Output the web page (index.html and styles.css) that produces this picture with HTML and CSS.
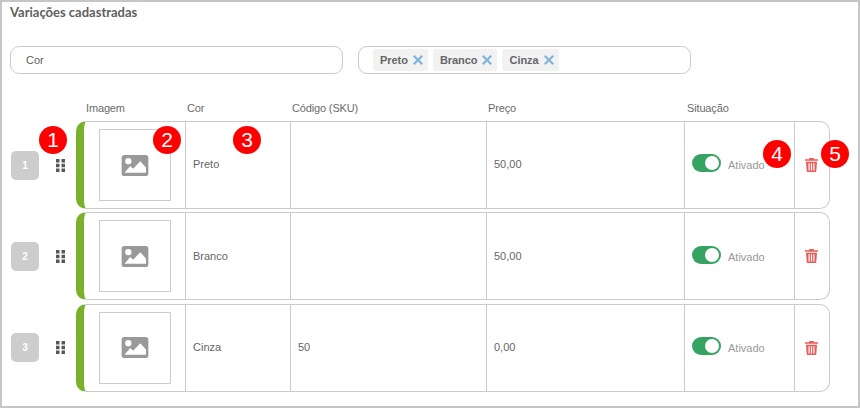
FILE: index.html
```html
<!DOCTYPE html>
<html lang="pt">
<head>
<meta charset="utf-8">
<title>Variações cadastradas</title>
<link rel="stylesheet" href="styles.css">
</head>
<body>
<svg class="defs" width="0" height="0" aria-hidden="true">
  <symbol id="img" viewBox="0 0 28 22"><path fill-rule="evenodd" d="M3 0h22a3 3 0 0 1 3 3v16a3 3 0 0 1-3 3H3a3 3 0 0 1-3-3V3a3 3 0 0 1 3-3zM7 3.200a3.300 3.300 0 1 0 0 6.600 3.300 3.300 0 0 0 0-6.600zM3 18.500h22.500v-5.500l-6-6.500-7.500 8-3-3z"/></symbol>
  <symbol id="grip" viewBox="0 0 9 13"><path d="M0 0h3.500v3.500H0zM5.500 0H9v3.500H5.500zM0 4.750h3.500v3.500H0zM5.500 4.750H9v3.500H5.500zM0 9.500h3.500V13H0zM5.500 9.500H9V13H5.500z"/></symbol>
  <symbol id="trash" viewBox="0 0 13 14"><path fill-rule="evenodd" d="M4.500 0h4l.6 1.300H13v1.500H0V1.300h3.900zM1 3.700h11l-.7 9.200a1.100 1.100 0 0 1-1.100 1.100H2.800a1.100 1.100 0 0 1-1.100-1.100zM3.500 5.200v7.200h1.200V5.200zM5.900 5.200v7.200h1.200V5.200zM8.300 5.200v7.200h1.200V5.200z"/></symbol>
  <symbol id="x" viewBox="0 0 10 10"><path d="M1.600 0 5 3.400 8.400 0 10 1.600 6.600 5 10 8.400 8.400 10 5 6.600 1.600 10 0 8.400 3.400 5 0 1.600z"/></symbol>
</svg>
<main class="frame">
  <h2 class="title">Variações cadastradas</h2>
  <div class="fields">
    <div class="field field-name">Cor</div>
    <div class="field field-tags">
      <span class="tag">Preto <svg class="tag-x"><use href="#x"/></svg></span>
      <span class="tag">Branco <svg class="tag-x"><use href="#x"/></svg></span>
      <span class="tag">Cinza <svg class="tag-x"><use href="#x"/></svg></span>
    </div>
  </div>
  <div class="head">
    <span>Imagem</span><span>Cor</span><span>Código (SKU)</span><span>Preço</span><span>Situação</span>
  </div>
  <div class="rows">
    <div class="row">
      <span class="num">1</span>
      <svg class="grip"><use href="#grip"/></svg>
      <div class="card">
        <div class="cell cell-img"><div class="thumb"><svg class="img-ico"><use href="#img"/></svg></div></div>
        <div class="cell">Preto</div>
        <div class="cell"></div>
        <div class="cell">50,00</div>
        <div class="cell cell-status"><span class="toggle"></span><span class="status">Ativado</span></div>
        <div class="cell cell-del"><svg class="trash"><use href="#trash"/></svg></div>
      </div>
    </div>
    <div class="row">
      <span class="num">2</span>
      <svg class="grip"><use href="#grip"/></svg>
      <div class="card">
        <div class="cell cell-img"><div class="thumb"><svg class="img-ico"><use href="#img"/></svg></div></div>
        <div class="cell">Branco</div>
        <div class="cell"></div>
        <div class="cell">50,00</div>
        <div class="cell cell-status"><span class="toggle"></span><span class="status">Ativado</span></div>
        <div class="cell cell-del"><svg class="trash"><use href="#trash"/></svg></div>
      </div>
    </div>
    <div class="row">
      <span class="num">3</span>
      <svg class="grip"><use href="#grip"/></svg>
      <div class="card">
        <div class="cell cell-img"><div class="thumb"><svg class="img-ico"><use href="#img"/></svg></div></div>
        <div class="cell">Cinza</div>
        <div class="cell">50</div>
        <div class="cell">0,00</div>
        <div class="cell cell-status"><span class="toggle"></span><span class="status">Ativado</span></div>
        <div class="cell cell-del"><svg class="trash"><use href="#trash"/></svg></div>
      </div>
    </div>
  </div>
  <span class="mark mark-1">1</span>
  <span class="mark mark-2">2</span>
  <span class="mark mark-3">3</span>
  <span class="mark mark-4">4</span>
  <span class="mark mark-5">5</span>
</main>
</body>
</html>
```
FILE: styles.css
```css
* { box-sizing: border-box; }
html, body { margin: 0; padding: 0; background: #fff; }
body { width: 860px; height: 408px; overflow: hidden; font-family: "Liberation Sans", Arial, sans-serif; font-size: 11px; color: #666; }
.defs { position: absolute; }
.frame { position: relative; width: 860px; height: 408px; border: 2px solid #c6c6c6; padding: 0 0 0 8px; }
.title { margin: 0; padding-top: 2px; height: 44px; font: 700 13px/16px Lato, sans-serif; color: #5f5f5f; }
.fields { display: flex; gap: 15px; }
.field { width: 333px; height: 28px; border: 1px solid #cbcbcb; border-radius: 9px; display: flex; align-items: center; background: #fff; }
.field-name { padding-left: 15px; color: #5f5f5f; }
.field-tags { padding-left: 14px; gap: 5px; }
.tag { display: flex; align-items: center; gap: 5px; height: 22px; padding: 0 5px 0 7px; border-radius: 2px; background: #f2f2f2; font-weight: 700; color: #666; letter-spacing: -0.05px; }
.tag-x { width: 10px; height: 10px; fill: #7fb5d8; }
.head { display: grid; grid-template-columns: 101px 105px 196px 199px 110px; height: 47px; padding-left: 76px; padding-top: 28px; line-height: 13px; color: #6b6b6b; letter-spacing: -0.15px; }
.rows { display: flex; flex-direction: column; gap: 3px; }
.row { display: flex; align-items: center; height: 88.4px; }
.num { width: 28px; height: 29px; margin-left: 1px; border-radius: 5px; background: #cdcdcd; color: #fff; font-size: 10px; font-weight: 700; display: flex; align-items: center; justify-content: center; }
.grip { width: 9px; height: 13px; margin-left: 17px; fill: #55585c; }
.card { align-self: flex-start; width: 754px; height: 88px; margin-left: 11px; border: 1px solid #cbcbcb; border-left: 8px solid #79b22a; border-radius: 10px; display: grid; grid-template-columns: 102px 105px 196px 198px 110px 1fr; overflow: hidden; }
.cell { display: flex; align-items: center; padding: 0 0 1.5px 7px; border-right: 1px solid #cbcbcb; color: #666; }
.cell:last-child { border-right: 0; }
.cell-img { padding: 0 0 0 15px; }
.thumb { width: 72px; height: 72px; border: 1px solid #cbcbcb; display: flex; align-items: center; justify-content: center; }
.img-ico { width: 28px; height: 21px; fill: #999; }
.cell-status { padding-left: 7px; gap: 7px; }
.toggle { position: relative; width: 29px; height: 18px; border-radius: 9px; background: #37a362; margin-top: -2px; }
.toggle::after { content: ""; position: absolute; right: 2px; top: 2px; width: 14px; height: 14px; border-radius: 50%; background: #fff; }
.status { color: #999; margin-top: 2px; }
.cell-del { padding: 0 0 0 10px; }
.trash { width: 13px; height: 14px; fill: #eb5b57; }
.mark { position: absolute; width: 28px; height: 28px; border-radius: 50%; background: #f00; color: #fff; font-size: 21px; line-height: 28px; text-align: center; }
.mark-1 { left: 37px; top: 124px; }
.mark-2 { left: 151px; top: 124px; }
.mark-3 { left: 231px; top: 124px; }
.mark-4 { left: 761px; top: 138px; }
.mark-5 { left: 819px; top: 138px; }
```
